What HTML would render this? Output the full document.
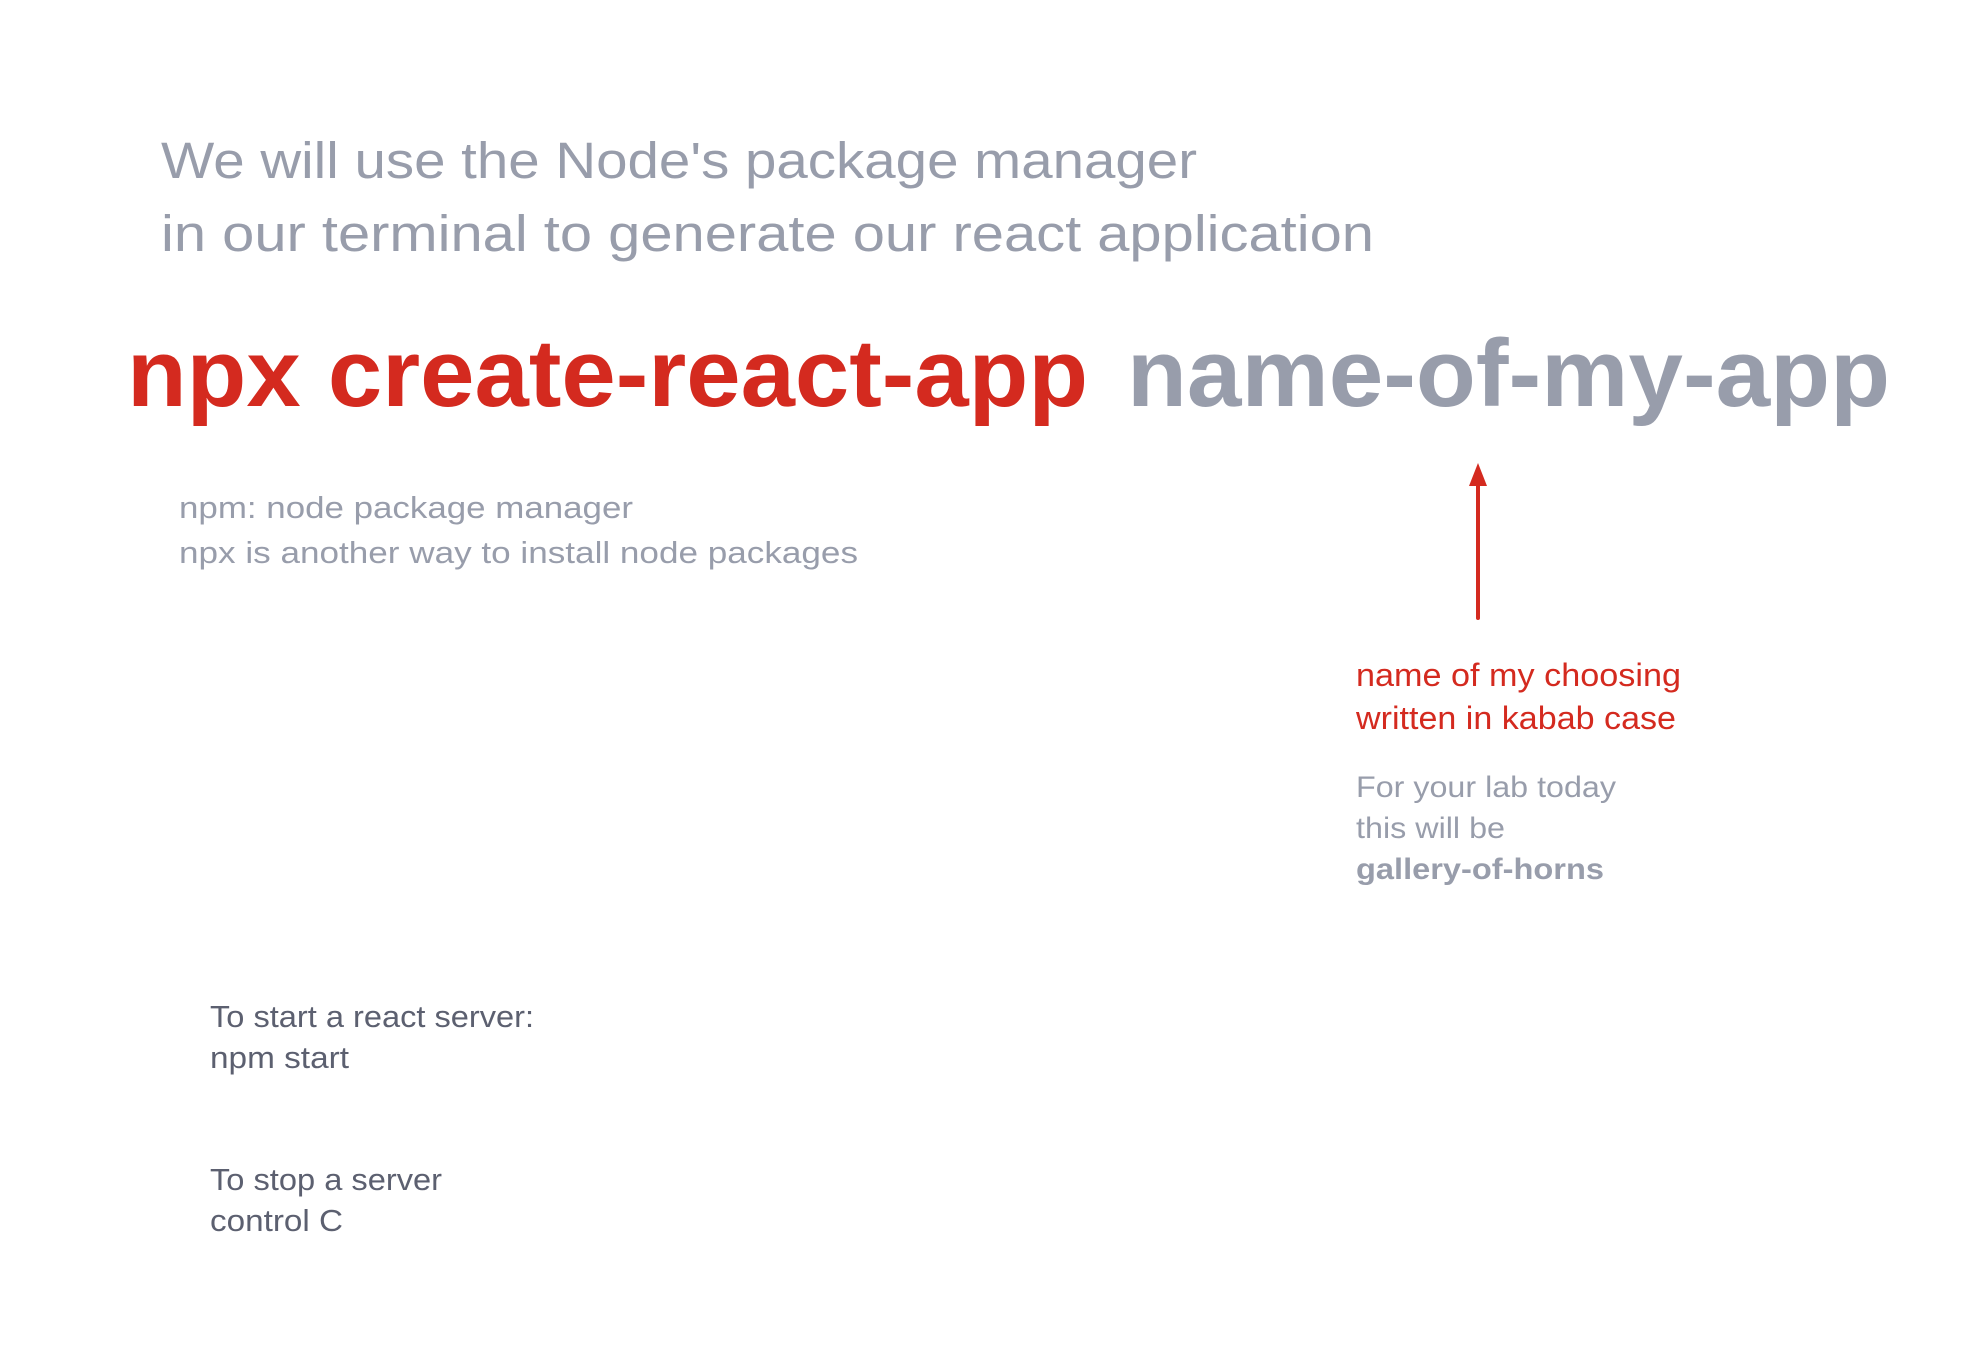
<!DOCTYPE html>
<html><head><meta charset="utf-8"><style>
html,body{margin:0;padding:0;background:#fff;width:1988px;height:1358px;overflow:hidden}
svg{display:block}
text{font-family:"Liberation Sans",sans-serif}
</style></head><body>
<svg width="1988" height="1358" viewBox="0 0 1988 1358" xmlns="http://www.w3.org/2000/svg">
<g fill="#989dab">
<text x="161" y="178" font-size="51" textLength="1036" lengthAdjust="spacingAndGlyphs">We will use the Node's package manager</text>
<text x="161" y="251" font-size="51" textLength="1213" lengthAdjust="spacingAndGlyphs">in our terminal to generate our react application</text>
</g>
<text x="127" y="406" font-size="96" font-weight="bold" fill="#d42a1f" textLength="961" lengthAdjust="spacingAndGlyphs">npx create-react-app</text>
<text x="1127" y="406" font-size="96" font-weight="bold" fill="#989dab" textLength="763" lengthAdjust="spacingAndGlyphs">name-of-my-app</text>
<g fill="#989dab" font-size="31">
<text x="179" y="518" textLength="454" lengthAdjust="spacingAndGlyphs">npm: node package manager</text>
<text x="179" y="563" textLength="679" lengthAdjust="spacingAndGlyphs">npx is another way to install node packages</text>
</g>
<line x1="1478" y1="486" x2="1478" y2="618" stroke="#d42a1f" stroke-width="4" stroke-linecap="round"/>
<polygon points="1478,463 1469,486 1487,486" fill="#d42a1f"/>
<g fill="#d42a1f" font-size="32">
<text x="1356" y="686" textLength="325" lengthAdjust="spacingAndGlyphs">name of my choosing</text>
<text x="1356" y="729" textLength="320" lengthAdjust="spacingAndGlyphs">written in kabab case</text>
</g>
<g fill="#989dab" font-size="30">
<text x="1356" y="797" textLength="260" lengthAdjust="spacingAndGlyphs">For your lab today</text>
<text x="1356" y="838" textLength="149" lengthAdjust="spacingAndGlyphs">this will be</text>
<text x="1356" y="879" font-weight="bold" textLength="248" lengthAdjust="spacingAndGlyphs">gallery-of-horns</text>
</g>
<g fill="#5c6070" font-size="31">
<text x="210" y="1027" textLength="324" lengthAdjust="spacingAndGlyphs">To start a react server:</text>
<text x="210" y="1068" textLength="139" lengthAdjust="spacingAndGlyphs">npm start</text>
<text x="210" y="1190" textLength="232" lengthAdjust="spacingAndGlyphs">To stop a server</text>
<text x="210" y="1231" textLength="133" lengthAdjust="spacingAndGlyphs">control C</text>
</g>
</svg>
</body></html>
